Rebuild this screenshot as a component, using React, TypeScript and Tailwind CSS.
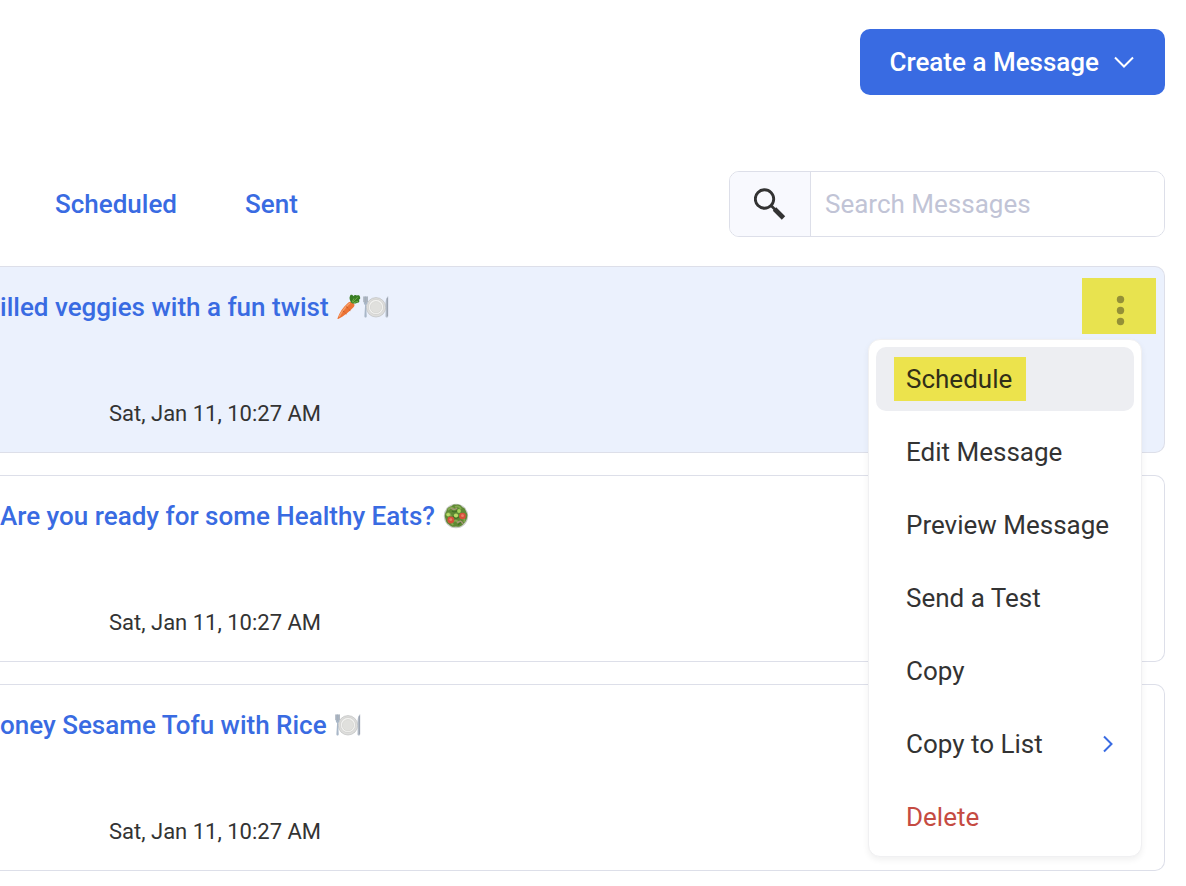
import { useState } from 'react';
import type { ReactNode } from 'react';

function Carrot() {
  return (
    <svg width="24" height="26" viewBox="0 0 24 26" role="img" aria-label="Carrot">
      <path d="M14.8 8.2C18 9.7 18.3 11.6 16 13.8C11.7 18.4 6.8 22.3 1.2 25C.6 25.3.3 24.8.5 24.2C2.6 18.2 6 13.2 10.6 9.2C12.1 7.9 13.4 7.5 14.8 8.2Z" fill="#ed7436" />
      <path d="M13 9C9.2 12.2 5 17 2.2 22.6" stroke="#f6a06b" strokeWidth="1.3" fill="none" />
      <path d="M9 12.6L11.2 14.2M11.8 15.6L13.4 16.6M5.8 17L7.6 18.1M8.4 19.2L9.6 20" stroke="#bd5425" strokeWidth=".8" />
      <path d="M14.2 8.8C12.8 6.2 11.7 3.9 13.3 1.3C14.4.3 15.8 1 16.5 2.2C17.4.5 19 .6 20 1.6C21.4.7 22.8 1.2 23 3C23.6 4.3 22.9 5.2 22 5.7C23 7.4 22 9 20.3 8.7C18.7 9.8 17 9.6 15.7 9.5Z" fill="#397d24" />
      <path d="M15 8.3L17 4.4M15.6 8.4L20.5 3.3M16.5 8.7L21 7.3" stroke="#70ad43" strokeWidth="1" />
    </svg>
  );
}

function Plate() {
  return (
    <svg width="26" height="26" viewBox="0 0 26 26" role="img" aria-label="Fork and knife with plate">
      <circle cx="13" cy="13.3" r="9.7" fill="#dededc" stroke="#bfc0c0" strokeWidth=".7" />
      <circle cx="13" cy="13" r="7.6" fill="#f2f2f0" stroke="#c9c9c7" strokeWidth=".6" />
      <circle cx="13" cy="13.2" r="5.7" fill="#e0e0dd" stroke="#cdcdc9" strokeWidth=".5" />
      <path d="M.7 2.5V8C.7 10 1.6 10.8 2.1 11L1.4 22C1.3 24 3.8 24 3.7 22L3.1 11C4 10.5 4.5 9.4 4.5 8V2.5" fill="#a9b7c8" />
      <path d="M.8 2.5V8M2.6 2.5V9M4.4 2.5V8" stroke="#a6adb6" strokeWidth=".9" />
      <path d="M25 2.3C22.8 4 22.3 8 22.8 13.3L22.5 22C22.5 24 25.2 24 25.2 22V2.3Z" fill="#b3bbc7" />
      <path d="M24.4 4V22" stroke="#8e96a2" strokeWidth=".7" />
    </svg>
  );
}

function Salad() {
  return (
    <svg width="26" height="26" viewBox="0 0 26 26" role="img" aria-label="Green salad">
      <circle cx="13" cy="13" r="12.2" fill="#c8cac5" />
      <path d="M13 1.8C16 .8 18 2.5 19.4 4.3C22.3 4.8 22.4 7.4 23.4 9.2C25.3 11.7 24 14 23.7 16C22.9 19 21 19.6 20 21.5C17.6 23.1 15.8 24.5 13 23.5C9.7 24.6 7.4 22.9 5.7 21.2C3 20 2.9 17 2.2 15C1.1 12 2.4 10 3.5 8C3.8 5 6 4 8.4 3.3C10 1.5 11.4 1.2 13 1.8Z" fill="#5f8a34" />
      <path d="M5 7Q8 3 11 6M12 4Q16 2 18 6M3 12Q6 8 8 13M10 19Q13 16 16 20M18 15Q23 15 21 19M5 19Q8 18 10 22" stroke="#83a94f" strokeWidth="1.8" fill="none" />
      <path d="M9 8Q12 10 15 7M10 13Q12 17 16 14M7 20L11 18M15 22L19 18" stroke="#447028" strokeWidth="1.3" fill="none" />
      <path d="M8 5Q11 8 14 5M14 20Q18 16 20 21" stroke="#a69578" strokeWidth="1.4" fill="none" />
      <circle cx="7.8" cy="17" r="3.4" fill="#d7503b" />
      <circle cx="19.5" cy="13" r="3.3" fill="#d7503b" />
      <circle cx="7.8" cy="16.6" r="1.4" fill="#e98169" />
      <circle cx="19.5" cy="12.7" r="1.4" fill="#e98169" />
      <circle cx="13" cy="12.5" r="2.1" fill="#b9db68" />
      <circle cx="16" cy="8" r="1.9" fill="#a8d65b" />
      <circle cx="5.2" cy="11.7" r="1.8" fill="#b9db68" />
    </svg>
  );
}

function MoreDots() {
  return (
    <svg width="74" height="56" viewBox="0 0 74 56" fill="#949037" aria-hidden="true">
      <circle cx="38.5" cy="21.5" r="3.7" />
      <circle cx="38.5" cy="32.5" r="3.7" />
      <circle cx="38.5" cy="43.5" r="3.7" />
    </svg>
  );
}

const menuItems = ['Schedule', 'Edit Message', 'Preview Message', 'Send a Test', 'Copy', 'Copy to List', 'Delete'];

function MessageMenu() {
  return (
    <div
      role="menu"
      className="absolute top-[72px] right-[22px] z-10 flex w-[274px] flex-col gap-[9px] rounded-xl border border-[#f0f0f2] bg-white p-[7px] shadow-[0_3px_6px_rgba(0,0,0,0.06)]"
    >
      {menuItems.map((item) => (
        <button
          key={item}
          role="menuitem"
          className={`flex h-16 items-center justify-between rounded-[10px] pr-5 pl-[18px] text-left text-[26px] leading-[44px] whitespace-nowrap ${
            item === 'Schedule' ? 'bg-[#edeef2]' : 'bg-white'
          } ${item === 'Delete' ? 'text-[#c54b42]' : 'text-[#333]'}`}
        >
          <span className={item === 'Schedule' ? 'bg-[#ece34c] px-3 pr-[14px] text-[#312f18]' : 'pl-3'}>{item}</span>
          {item === 'Copy to List' && (
            <svg width="12" height="18" viewBox="0 0 12 18" fill="none" stroke="#396be2" strokeWidth="2" aria-hidden="true">
              <path d="M2 1.5L9.5 9L2 16.5" />
            </svg>
          )}
        </button>
      ))}
    </div>
  );
}

type Message = {
  title: string;
  emoji: ReactNode;
  date: string;
};

const messages: Message[] = [
  { title: 'illed veggies with a fun twist', emoji: <><Carrot /><Plate /></>, date: 'Sat, Jan 11, 10:27 AM' },
  { title: 'Are you ready for some Healthy Eats?', emoji: <Salad />, date: 'Sat, Jan 11, 10:27 AM' },
  { title: 'oney Sesame Tofu with Rice', emoji: <Plate />, date: 'Sat, Jan 11, 10:27 AM' },
];

export default function App() {
  const [openRow, setOpenRow] = useState(0);

  return (
    <div className="min-h-screen overflow-x-hidden bg-white pt-[29px] pr-[21px] pb-[14px] font-['Roboto',sans-serif] text-[#333]">
      <header className="flex justify-end">
        <button className="flex h-[66px] items-center gap-[14px] rounded-[10px] bg-[#396be2] px-[30px] text-[26px] font-medium text-white">
          Create a Message
          <svg width="22" height="14" viewBox="0 0 22 14" fill="none" stroke="currentColor" strokeWidth="2" aria-hidden="true">
            <path d="M2 2.5L11 11.5L20 2.5" />
          </svg>
        </button>
      </header>

      <div className="mt-[76px] flex items-center justify-between">
        <nav className="flex gap-[68px] pl-[55px] text-[26px] font-medium text-[#396be2]">
          <a href="#scheduled">Scheduled</a>
          <a href="#sent">Sent</a>
        </nav>
        <div className="flex h-[66px] w-[436px] overflow-hidden rounded-[10px] border border-[#dddfe9]">
          <label htmlFor="search" aria-label="Search Messages" className="flex w-[81px] items-center justify-center border-r border-[#dddfe9] bg-[#f8f9fe]">
            <svg width="32" height="32" viewBox="0 0 32 32" fill="none" stroke="#333" aria-hidden="true">
              <circle cx="10.5" cy="11" r="9.2" strokeWidth="2.9" />
              <path d="M17 17.5L22 22.5" strokeWidth="2.6" />
              <path d="M20.5 21L29.5 30" strokeWidth="4.8" />
            </svg>
          </label>
          <input
            id="search"
            type="search"
            placeholder="Search Messages"
            className="min-w-0 flex-1 bg-white px-[14px] text-[26px] outline-none placeholder:text-[#c1c4d6]"
          />
        </div>
      </div>

      <main className="mt-[29px] flex flex-col gap-[22px]">
        {messages.map((message, index) => (
          <article
            key={message.title}
            className={`relative flex h-[187px] items-start justify-between rounded-r-[10px] border border-l-0 border-[#dddfe9] pr-2 ${
              openRow === index ? 'bg-[#ebf1fd]' : 'bg-white'
            }`}
          >
            <div className="pt-5">
              <h2 className="flex h-10 items-center gap-2 text-[26px] font-medium text-[#396be2]">
                <a href="#message">{message.title}</a>
                <span className="flex gap-[2px]">{message.emoji}</span>
              </h2>
              <p className="mt-[71px] pl-[109px] text-[22px] leading-8">{message.date}</p>
            </div>
            <button
              aria-label="Message options"
              onClick={() => setOpenRow(index)}
              className={`mt-[11px] bg-[#e8e34f] ${openRow === index ? '' : 'opacity-0'}`}
            >
              <MoreDots />
            </button>
            {openRow === index && <MessageMenu />}
          </article>
        ))}
      </main>
    </div>
  );
}
